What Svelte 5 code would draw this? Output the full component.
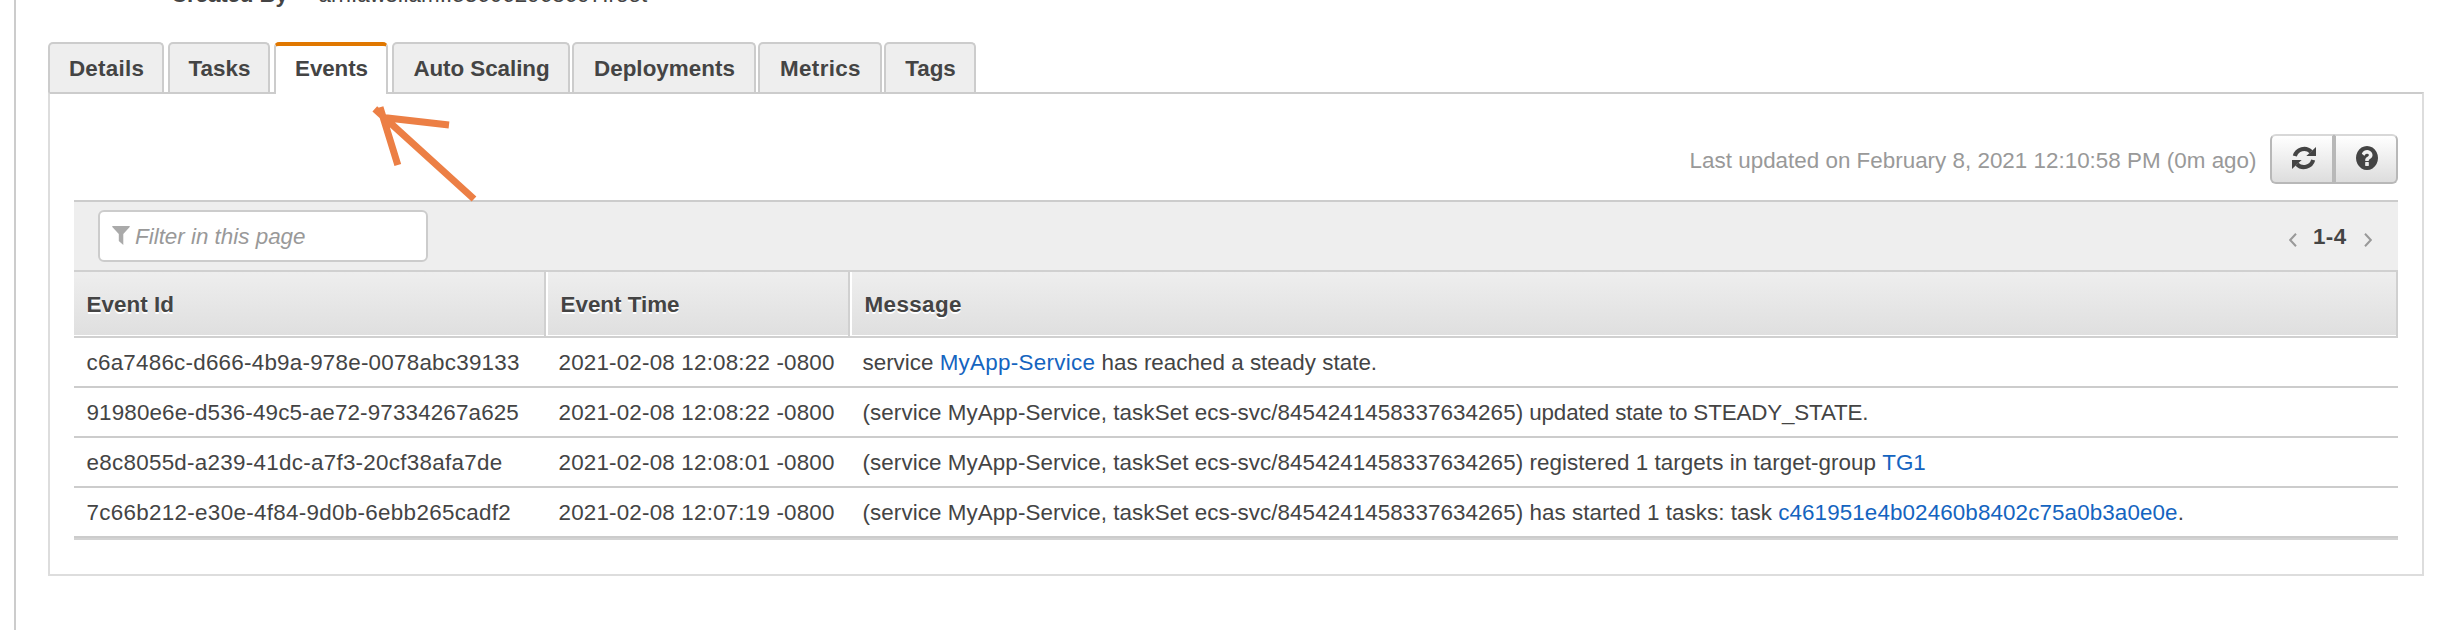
<script>
  const tabs = [
    { label: 'Details', width: 116, track: 0.25, gap: 4 },
    { label: 'Tasks', width: 102, track: 0.06, gap: 4 },
    { label: 'Events', width: 114, track: -0.1, gap: 4, active: true },
    { label: 'Auto Scaling', width: 178, track: -0.05, gap: 2 },
    { label: 'Deployments', width: 184, track: 0.05, gap: 2 },
    { label: 'Metrics', width: 124, track: 0.35, gap: 2 },
    { label: 'Tags', width: 92, track: 0, gap: 0 }
  ];
  const columns = [
    { label: 'Event Id', track: 0.05 },
    { label: 'Event Time', track: 0 },
    { label: 'Message', track: 0.4 }
  ];
  const source = { text: '(service MyApp-Service, taskSet ecs-svc/8454241458337634265)', track: 0.08 };
  const events = [
    {
      id: 'c6a7486c-d666-4b9a-978e-0078abc39133', track: 0.24, time: '2021-02-08 12:08:22 -0800',
      message: [
        { text: 'service ', track: 0 },
        { text: 'MyApp-Service', track: 0.29, link: true },
        { text: ' has reached a steady state.', track: 0.02 }
      ]
    },
    {
      id: '91980e6e-d536-49c5-ae72-97334267a625', track: 0.15, time: '2021-02-08 12:08:22 -0800',
      message: [source, { text: ' updated state to STEADY_STATE.', track: -0.16 }]
    },
    {
      id: 'e8c8055d-a239-41dc-a7f3-20cf38afa7de', track: 0.28, time: '2021-02-08 12:08:01 -0800',
      message: [
        source,
        { text: ' registered 1 targets in target-group ', track: 0.05 },
        { text: 'TG1', track: -0.1, link: true }
      ]
    },
    {
      id: '7c66b212-e30e-4f84-9d0b-6ebb265cadf2', track: 0.31, time: '2021-02-08 12:07:19 -0800',
      message: [
        source,
        { text: ' has started 1 tasks: task ', track: 0.04 },
        { text: 'c461951e4b02460b8402c75a0b3a0e0e', track: 0.11, link: true },
        { text: '.', track: 0 }
      ]
    }
  ];
</script>

<div class="page">
  <div class="summary">
    <b>Created By</b>
    <span>arn:aws:iam::536062968697:root</span>
  </div>

  <div class="tabs">
    {#each tabs as tab}
      <div
        class="tab"
        class:active={tab.active}
        style="width:{tab.width}px;margin-right:{tab.gap}px;letter-spacing:{tab.track}px"
      >{tab.label}</div>
    {/each}
  </div>

  <div class="panel">
    <div class="status">
      <span class="updated">Last updated on February 8, 2021 12:10:58 PM (0m ago)</span>
      <div class="buttons">
        <button aria-label="Refresh">
          <svg width="24" height="24" viewBox="0 0 72 72">
            <g>
              <path d="M8.5 30A29 29 0 0 1 57 17" fill="none" stroke="#444" stroke-width="12.5" />
              <path d="M72 3V30H43Z" fill="#444" />
            </g>
            <g transform="rotate(180 36 36)">
              <path d="M8.5 30A29 29 0 0 1 57 17" fill="none" stroke="#444" stroke-width="12.5" />
              <path d="M72 3V30H43Z" fill="#444" />
            </g>
          </svg>
        </button>
        <button aria-label="Help">
          <svg width="22" height="24" viewBox="128 128 1536 1536" preserveAspectRatio="none">
            <path fill="#444" d="M1024 1376v-192q0-14-9-23t-23-9h-192q-14 0-23 9t-9 23v192q0 14 9 23t23 9h192q14 0 23-9t9-23zm256-672q0-88-55.5-163t-138.5-116-170-41q-243 0-371 213-15 24 8 42l132 100q7 6 19 6 16 0 25-12 53-68 86-92 34-24 86-24 48 0 85.5 26t37.5 59q0 38-20 61t-68 45q-63 28-115.5 86.5t-52.5 125.5v36q0 14 9 23t23 9h192q14 0 23-9t9-23q0-19 21.5-49.5t54.5-49.5q32-18 49-28.5t46-35 44.5-48 28-60.5 12.5-81zm384 192q0 209-103 385.5t-279.5 279.5-385.5 103-385.5-103-279.5-279.5-103-385.5 103-385.5 279.5-279.5 385.5-103 385.5 103 279.5 279.5 103 385.5z" />
          </svg>
        </button>
      </div>
    </div>

    <div class="toolbar">
      <div class="filter">
        <svg width="18" height="19" viewBox="0 0 18 19">
          <path d="M0.3 0H17.7V1L11.3 8V19L6.8 15V8L0.3 1Z" fill="#aaa" />
        </svg>
        <span>Filter in this page</span>
      </div>
      <div class="pager">
        <svg width="8" height="14" viewBox="0 0 8 14"><path d="M7 0.8L1.2 7L7 13.2" /></svg>
        <b>1-4</b>
        <svg width="8" height="14" viewBox="0 0 8 14"><path d="M1 0.8L6.8 7L1 13.2" /></svg>
      </div>
    </div>

    <div class="grid head">
      {#each columns as column}
        <div class="th" style="letter-spacing:{column.track}px">{column.label}</div>
      {/each}
    </div>
    {#each events as event}
      <div class="grid row">
        <div style="letter-spacing:{event.track}px">{event.id}</div>
        <div class="time">{event.time}</div>
        <div>{#each event.message as part}<span class:link={part.link} style="letter-spacing:{part.track}px">{part.text}</span>{/each}</div>
      </div>
    {/each}
    <div class="tail"></div>
  </div>

  <svg class="arrow" width="110" height="110" viewBox="370 100 110 110">
    <path d="M374.8 108.8L474 199M381 117.3L449 125M380 107.3L397.8 165" />
  </svg>
</div>

<style>
  .page {
    box-sizing: border-box;
    position: relative;
    width: 2432px;
    height: 630px;
    margin-left: 14px;
    padding: 0 22px 0 32px;
    border-left: 2px solid #ccc;
    overflow: hidden;
    background: #fff;
    color: #444;
    font: 22.4px/25px 'Liberation Sans', Arial, sans-serif;
    white-space: nowrap;
  }
  .summary {
    display: flex;
    height: 60px;
    margin-top: -18px;
    padding-left: 123px;
  }
  .summary b {
    width: 147.5px;
    letter-spacing: -0.15px;
  }
  .summary span {
    letter-spacing: 0.05px;
  }
  .tabs {
    display: flex;
    height: 50px;
  }
  .tab {
    box-sizing: border-box;
    flex: none;
    height: 50px;
    padding: 12px 0 0 1px;
    border: 2px solid #ccc;
    border-bottom: 0;
    border-radius: 5px 5px 0 0;
    background: #eee;
    text-align: center;
    font-weight: bold;
  }
  .tab.active {
    position: relative;
    height: 52px;
    padding-top: 10px;
    border-top: 4px solid #e07700;
    background: #fff;
  }
  .panel {
    box-sizing: border-box;
    width: 2376px;
    height: 484px;
    padding: 40px 24px 0;
    border: 2px solid #ddd;
    border-top-color: #ccc;
  }
  .status {
    display: flex;
    justify-content: flex-end;
    height: 66px;
  }
  .updated {
    padding: 14px 13.5px 0 0;
    color: #999;
    letter-spacing: 0.01px;
  }
  .buttons {
    display: flex;
    height: 50px;
  }
  button {
    box-sizing: border-box;
    display: flex;
    align-items: center;
    justify-content: center;
    width: 64px;
    height: 50px;
    margin: 0;
    padding: 0 0 3px;
    border: 2px solid #b8b8b8;
    border-top-color: #d8d8d8;
    border-radius: 6px 0 0 6px;
    background: linear-gradient(#fff, #ddd);
  }
  button:first-child {
    padding-left: 4px;
  }
  button:last-child {
    padding-left: 2px;
    border-radius: 0 6px 6px 0;
  }
  .toolbar {
    box-sizing: border-box;
    display: flex;
    justify-content: space-between;
    height: 70px;
    padding: 8px 26px 0 24px;
    border-top: 2px solid #ccc;
    background: #eee;
  }
  .filter {
    box-sizing: border-box;
    display: flex;
    width: 330px;
    height: 52px;
    padding: 12px 0 0 11.5px;
    border: 2px solid #ccc;
    border-radius: 6px;
    background: #fff;
    color: #999;
    font-style: italic;
  }
  .filter svg {
    margin: 2px 5.5px 0 0;
  }
  .pager {
    display: flex;
    padding-top: 14px;
  }
  .pager b {
    width: 51px;
    padding-left: 16.5px;
    letter-spacing: 0.4px;
  }
  .pager svg {
    margin-top: 8.5px;
    fill: none;
    stroke: #999;
    stroke-width: 2;
  }
  .grid {
    display: grid;
    grid-template-columns: 472px 304px 1548px;
  }
  .head {
    border-top: 2px solid #d0d0d0;
    font-weight: bold;
    text-shadow: 0 2px 0 #fff;
  }
  .th {
    box-sizing: border-box;
    height: 66px;
    padding: 20px 12px 0 12.5px;
    border-right: 2px solid #d0d0d0;
    border-bottom: 2px solid #d0d0d0;
    background: linear-gradient(#eee, #dfdfdf);
    box-shadow: inset 0 -1px #fff;
  }
  .th + .th {
    padding-left: 14.5px;
    box-shadow: inset 2px 0 #fff, inset 0 -1px #fff;
  }
  .row {
    box-sizing: border-box;
    height: 50px;
    padding-top: 12px;
    border-bottom: 2px solid #ccc;
  }
  .row > div {
    padding-left: 12.5px;
    white-space: pre;
  }
  .time {
    letter-spacing: 0.19px;
  }
  .link {
    color: #1464c0;
  }
  .tail {
    height: 2px;
    background: #d3d3d3;
  }
  .arrow {
    position: absolute;
    left: 354px;
    top: 100px;
    fill: none;
    stroke: #ec7f45;
    stroke-width: 7;
  }
</style>
